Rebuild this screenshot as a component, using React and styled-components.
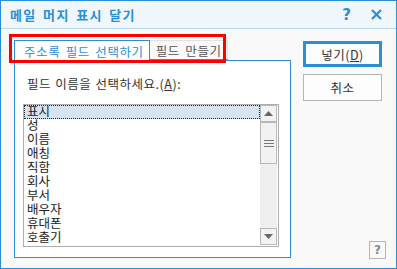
import styled, { createGlobalStyle } from "styled-components";

const GlobalStyle = createGlobalStyle`
    html, body {
        margin: 0;
        padding: 0;
        background: #f9f9f9;
    }
    * {
        box-sizing: border-box;
    }
`;

const fields = ["표시", "성", "이름", "애칭", "직함", "회사", "부서", "배우자", "휴대폰", "호출기"];

const App = () => {
    return (
        <Window>
            <GlobalStyle />
            <TitleBar>
                <Title>메일 머지 표시 달기</Title>
                <TitleButtons>
                    <TitleButton>?</TitleButton>
                    <TitleButton>
                        <svg width="11" height="11" viewBox="0 0 11 11">
                            <path d="M1 1 L10 10 M10 1 L1 10" stroke="#2a8fd5" strokeWidth="2.2" />
                        </svg>
                    </TitleButton>
                </TitleButtons>
            </TitleBar>

            <Body>
                <LeftColumn>
                    <TabStrip>
                        <Tab $active>주소록 필드 선택하기</Tab>
                        <Tab>필드 만들기</Tab>
                        <Highlight />
                    </TabStrip>
                    <Panel>
                        <Label>필드 이름을 선택하세요.(<u>A</u>):</Label>
                        <ListBox>
                            <Items>
                                {fields.map((f, i) => (
                                    <Item key={f} $selected={i === 0}>{f}</Item>
                                ))}
                            </Items>
                            <ScrollBar>
                                <ArrowButton>
                                    <svg width="9" height="5" viewBox="0 0 9 5"><path d="M0 5 L4.5 0 L9 5 Z" fill="#666" /></svg>
                                </ArrowButton>
                                <Thumb>
                                    <Grip />
                                    <Grip />
                                    <Grip />
                                </Thumb>
                                <Track />
                                <ArrowButton>
                                    <svg width="9" height="5" viewBox="0 0 9 5"><path d="M0 0 L9 0 L4.5 5 Z" fill="#666" /></svg>
                                </ArrowButton>
                            </ScrollBar>
                        </ListBox>
                    </Panel>
                </LeftColumn>

                <RightColumn>
                    <Button $primary>넣기(<u>D</u>)</Button>
                    <Button>취소</Button>
                    <Spacer />
                    <HelpButton>?</HelpButton>
                </RightColumn>
            </Body>
        </Window>
    );
};

const Window = styled.div`
    width: 397px;
    height: 269px;
    border: 1px solid #2a8fd5;
    background: #f9f9f9;
    display: flex;
    flex-direction: column;
    font-family: "Noto Sans CJK KR", "Noto Sans", sans-serif;
    font-size: 12px;
    color: #333;
`;
const TitleBar = styled.div`
    height: 28px;
    flex-shrink: 0;
    background: #eff7fc;
    border-bottom: 1px solid #b5d8ef;
    display: flex;
    align-items: center;
    justify-content: space-between;
    padding: 0 14px 0 9px;
`;
const Title = styled.div`
    color: #2a8fd5;
    font-weight: 700;
    font-size: 13px;
    letter-spacing: 1.4px;
    word-spacing: 2px;
`;
const TitleButtons = styled.div`
    display: flex;
    align-items: center;
    gap: 19px;
`;
const TitleButton = styled.div`
    color: #2a8fd5;
    font-weight: 700;
    font-size: 15px;
    font-family: "DejaVu Sans", sans-serif;
    width: 11px;
    display: flex;
    align-items: center;
    justify-content: center;
`;
const Body = styled.div`
    flex: 1;
    display: flex;
    padding: 11px 0 10px 13px;
`;
const LeftColumn = styled.div`
    width: 277px;
    display: flex;
    flex-direction: column;
`;
const TabStrip = styled.div`
    position: relative;
    display: flex;
    align-items: flex-end;
    height: 20px;
`;
const Tab = styled.div`
    height: ${p => (p.$active ? "21px" : "20px")};
    margin-bottom: ${p => (p.$active ? "-1px" : "0")};
    padding: ${p => (p.$active ? "0 5px 0 9px" : "0 5px 0 6px")};
    display: flex;
    align-items: center;
    font-size: 12.5px;
    letter-spacing: 0.6px;
    word-spacing: 2px;
    color: ${p => (p.$active ? "#2a8fd5" : "#555")};
    background: ${p => (p.$active ? "#fff" : "#f9f9f9")};
    border: 1px solid ${p => (p.$active ? "#2a8fd5" : "#e2e2e2")};
    border-bottom: ${p => (p.$active ? "none" : "1px solid #2a8fd5")};
    border-left: ${p => (p.$active ? "1px solid #2a8fd5" : "none")};
    position: relative;
    z-index: ${p => (p.$active ? 1 : 0)};
`;
const Highlight = styled.div`
    position: absolute;
    left: -5px;
    top: -6px;
    width: 217px;
    height: 29px;
    border: 3px solid #ff0000;
    z-index: 2;
    pointer-events: none;
`;
const Panel = styled.div`
    flex: 1;
    background: #fff;
    border: 1px solid #2a8fd5;
    padding: 15px 0 0 8px;
`;
const Label = styled.div`
    line-height: 16px;
    margin-left: 4px;
    color: #333;
    font-size: 12.5px;
    letter-spacing: 0.5px;
    word-spacing: 1px;
`;
const ListBox = styled.div`
    margin-top: 12px;
    width: 256px;
    height: 143px;
    border: 1px solid #adadad;
    display: flex;
    padding: 0 1px 1px 0;
`;
const Items = styled.div`
    flex: 1;
    display: flex;
    flex-direction: column;
`;
const Item = styled.div`
    height: 14px;
    line-height: 12px;
    padding-left: 2px;
    font-family: "Liberation Sans", "Noto Sans CJK KR", sans-serif;
    font-size: 12.5px;
    color: #222;
    background: ${p => (p.$selected ? "#d6e4f2" : "transparent")};
    border: 1px dotted ${p => (p.$selected ? "#222" : "transparent")};
    display: flex;
    align-items: center;
`;
const ScrollBar = styled.div`
    width: 17px;
    display: flex;
    flex-direction: column;
    background: #efefef;
`;
const ArrowButton = styled.div`
    height: 17px;
    border: 1px solid #b8b8b8;
    background: #f2f2f2;
    display: flex;
    align-items: center;
    justify-content: center;
`;
const Thumb = styled.div`
    height: 42px;
    border: 1px solid #b8b8b8;
    background: #f2f2f2;
    display: flex;
    flex-direction: column;
    align-items: center;
    justify-content: center;
    gap: 2px;
`;
const Grip = styled.div`
    width: 10px;
    height: 1px;
    background: #777;
`;
const Track = styled.div`
    flex: 1;
`;
const RightColumn = styled.div`
    margin-left: 12px;
    width: 83px;
    display: flex;
    flex-direction: column;
    padding-top: 1px;
    gap: 7px;
`;
const Button = styled.div`
    width: 79px;
    height: ${p => (p.$primary ? "26px" : "27px")};
    border: ${p => (p.$primary ? "3px solid #2a8fd5" : "1px solid #b5b5b5")};
    background: #fdfdfd;
    display: flex;
    align-items: center;
    justify-content: center;
    color: #333;
    font-size: 12.5px;
    letter-spacing: 0.5px;
`;
const Spacer = styled.div`
    flex: 1;
`;
const HelpButton = styled.div`
    align-self: flex-end;
    width: 17px;
    height: 18px;
    margin-bottom: -1px;
    border: 1px solid #b5b5b5;
    display: flex;
    align-items: center;
    justify-content: center;
    color: #888;
    font-weight: 700;
    font-family: "DejaVu Sans", sans-serif;
    font-size: 12px;
`;

export default App;
